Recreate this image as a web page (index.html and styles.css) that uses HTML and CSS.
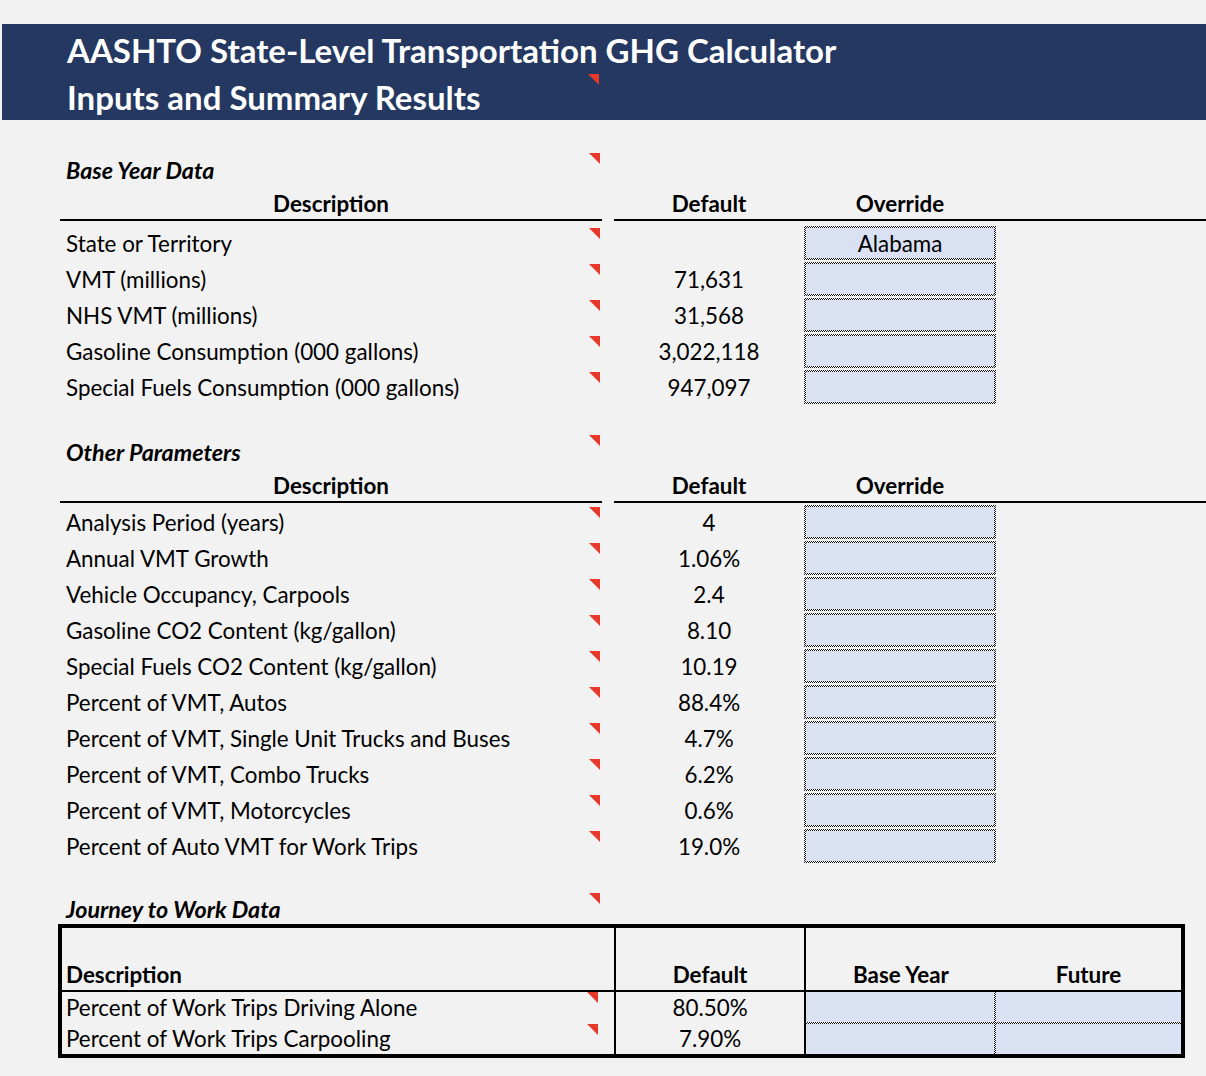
FILE: index.html
```html
<!DOCTYPE html>
<html>
<head>
<meta charset="utf-8">
<link rel="stylesheet" href="styles.css">
</head>
<body>
<header class="banner">
  <div class="banner-line">AASHTO State-Level Transportation GHG Calculator</div>
  <div class="banner-line">Inputs and Summary Results</div>
  <span class="tri tri-banner"></span>
</header>

<section class="sec sec-base">
  <div class="row title-row"><div></div><div class="desc title">Base Year Data<span class="tri tri-title"></span></div></div>
  <div class="row hdr-row">
    <div></div><div class="hcell center">Description</div><div></div>
    <div class="hcell center">Default</div><div class="hcell center">Override</div><div class="hcell"></div>
  </div>
  <div class="rows">
    <div class="row data-row"><div></div><div class="desc">State or Territory<span class="tri"></span></div><div></div><div class="num"></div><div class="inp">Alabama</div></div>
    <div class="row data-row"><div></div><div class="desc">VMT (millions)<span class="tri"></span></div><div></div><div class="num">71,631</div><div class="inp"></div></div>
    <div class="row data-row"><div></div><div class="desc">NHS VMT (millions)<span class="tri"></span></div><div></div><div class="num">31,568</div><div class="inp"></div></div>
    <div class="row data-row"><div></div><div class="desc">Gasoline Consumption (000 gallons)<span class="tri"></span></div><div></div><div class="num">3,022,118</div><div class="inp"></div></div>
    <div class="row data-row"><div></div><div class="desc">Special Fuels Consumption (000 gallons)<span class="tri"></span></div><div></div><div class="num">947,097</div><div class="inp"></div></div>
  </div>
</section>

<section class="sec sec-other">
  <div class="row title-row"><div></div><div class="desc title">Other Parameters<span class="tri tri-title"></span></div></div>
  <div class="row hdr-row">
    <div></div><div class="hcell center">Description</div><div></div>
    <div class="hcell center">Default</div><div class="hcell center">Override</div><div class="hcell"></div>
  </div>
  <div class="rows rows-other">
    <div class="row data-row"><div></div><div class="desc">Analysis Period (years)<span class="tri"></span></div><div></div><div class="num">4</div><div class="inp"></div></div>
    <div class="row data-row"><div></div><div class="desc">Annual VMT Growth<span class="tri"></span></div><div></div><div class="num">1.06%</div><div class="inp"></div></div>
    <div class="row data-row"><div></div><div class="desc">Vehicle Occupancy, Carpools<span class="tri"></span></div><div></div><div class="num">2.4</div><div class="inp"></div></div>
    <div class="row data-row"><div></div><div class="desc">Gasoline CO2 Content (kg/gallon)<span class="tri"></span></div><div></div><div class="num">8.10</div><div class="inp"></div></div>
    <div class="row data-row"><div></div><div class="desc">Special Fuels CO2 Content (kg/gallon)<span class="tri"></span></div><div></div><div class="num">10.19</div><div class="inp"></div></div>
    <div class="row data-row"><div></div><div class="desc">Percent of VMT, Autos<span class="tri"></span></div><div></div><div class="num">88.4%</div><div class="inp"></div></div>
    <div class="row data-row"><div></div><div class="desc">Percent of VMT, Single Unit Trucks and Buses<span class="tri"></span></div><div></div><div class="num">4.7%</div><div class="inp"></div></div>
    <div class="row data-row"><div></div><div class="desc">Percent of VMT, Combo Trucks<span class="tri"></span></div><div></div><div class="num">6.2%</div><div class="inp"></div></div>
    <div class="row data-row"><div></div><div class="desc">Percent of VMT, Motorcycles<span class="tri"></span></div><div></div><div class="num">0.6%</div><div class="inp"></div></div>
    <div class="row data-row"><div></div><div class="desc">Percent of Auto VMT for Work Trips<span class="tri"></span></div><div></div><div class="num">19.0%</div><div class="inp"></div></div>
  </div>
</section>

<section class="sec sec-journey">
  <div class="row title-row title-journey"><div></div><div class="desc title">Journey to Work Data<span class="tri tri-title"></span></div></div>
  <div class="jtable">
    <div class="jrow jhead">
      <div class="jc jdesc"><span class="jtext bold">Description</span></div>
      <div class="jc jnum"><span class="bold">Default</span></div>
      <div class="jc jnum jnoline"><span class="bold">Base Year</span></div>
      <div class="jc jnum jnoline"><span class="bold">Future</span></div>
    </div>
    <div class="jrow jdata jfirst">
      <div class="jc jdesc">Percent of Work Trips Driving Alone<span class="tri"></span></div>
      <div class="jc jnum">80.50%</div>
      <div class="jc jin jin-base jin-top"></div>
      <div class="jc jin jin-fut jin-top"></div>
    </div>
    <div class="jrow jdata jsecond">
      <div class="jc jdesc">Percent of Work Trips Carpooling<span class="tri"></span></div>
      <div class="jc jnum">7.90%</div>
      <div class="jc jin jin-base"></div>
      <div class="jc jin jin-fut"></div>
    </div>
  </div>
</section>
</body>
</html>
```

FILE: styles.css
```css
html, body {
  margin: 0;
  padding: 0;
  background: #f2f2f2;
}
body {
  font-family: "Lato", "Open Sans", sans-serif;
  font-size: 22.4px;
  color: #000;
  width: 1206px;
  height: 1076px;
  overflow: hidden;
}

.banner {
  position: relative;
  margin: 24px 0 0 2px;
  height: 96px;
  box-sizing: border-box;
  padding: 3px 0 0 65px;
  background: #253861;
  color: #fff;
  font-weight: 700;
  font-size: 33px;
  line-height: 47px;
}
.banner-line { white-space: nowrap; }

.tri {
  position: absolute;
  right: 2px;
  top: 3px;
  width: 11px;
  height: 11px;
  background: #e8382b;
  clip-path: polygon(0 0, 100% 0, 100% 100%);
}
.tri-banner { left: 586px; top: 50px; right: auto; }

.row {
  display: grid;
  grid-template-columns: 60px 542px 12px 190px 192px 1fr;
}
.desc {
  position: relative;
  padding-left: 6px;
  white-space: nowrap;
}
.title {
  font-weight: 700;
  font-style: italic;
  font-size: 23.3px;
}
.title .tri { top: 1px; }

.sec-base { margin-top: 32px; }
.sec-other { margin-top: 29px; }
.sec-journey { margin-top: 28px; }

.title-row { height: 36px; line-height: 36px; }
.title-journey { height: 32px; line-height: 34px; }

.hdr-row { height: 32px; }
.hcell {
  font-weight: 700;
  line-height: 31px;
  border-bottom: 2px solid #000;
}
.center { text-align: center; }

.rows { margin-top: 5px; }
.rows-other { margin-top: 2px; }

.data-row { height: 36px; line-height: 37px; }
.num { text-align: center; }
.inp {
  margin: 1px 0;
  height: 34px;
  box-sizing: border-box;
  line-height: 31px;
  text-align: center;
  border: 2px solid transparent;
  background:
    linear-gradient(#d9e1f2, #d9e1f2) padding-box,
    repeating-conic-gradient(#111 0 25%, #fff 0 50%) 0 0 / 2px 2px border-box;
}

.jtable {
  margin-left: 58px;
  width: 1127px;
  box-sizing: border-box;
  border: 4px solid #000;
}
.jrow {
  display: grid;
  grid-template-columns: 554px 190px 190px 1fr;
}
.jc { position: relative; white-space: nowrap; }
.jhead { height: 64px; }
.jhead .jc {
  border-bottom: 2px solid #000;
  display: flex;
  align-items: flex-end;
  line-height: 30px;
}
.jhead .jnum { justify-content: center; }
.bold { font-weight: 700; }
.jdesc { border-right: 2px solid #000; padding-left: 4px; }
.jdesc .tri { right: 16px; top: 0; }
.jnum { text-align: center; border-right: 2px solid #000; }
.jhead .jnoline { border-right: none; }

.jfirst { height: 32px; line-height: 32px; }
.jsecond { height: 30px; line-height: 30px; }

.jin {
  box-sizing: border-box;
  border: 0 solid transparent;
  background:
    linear-gradient(#d9e1f2, #d9e1f2) padding-box,
    repeating-conic-gradient(#111 0 25%, #fff 0 50%) 0 0 / 2px 2px border-box;
}
.jin-base { border-right-width: 2px; }
.jin-top { border-bottom-width: 2px; }
```
